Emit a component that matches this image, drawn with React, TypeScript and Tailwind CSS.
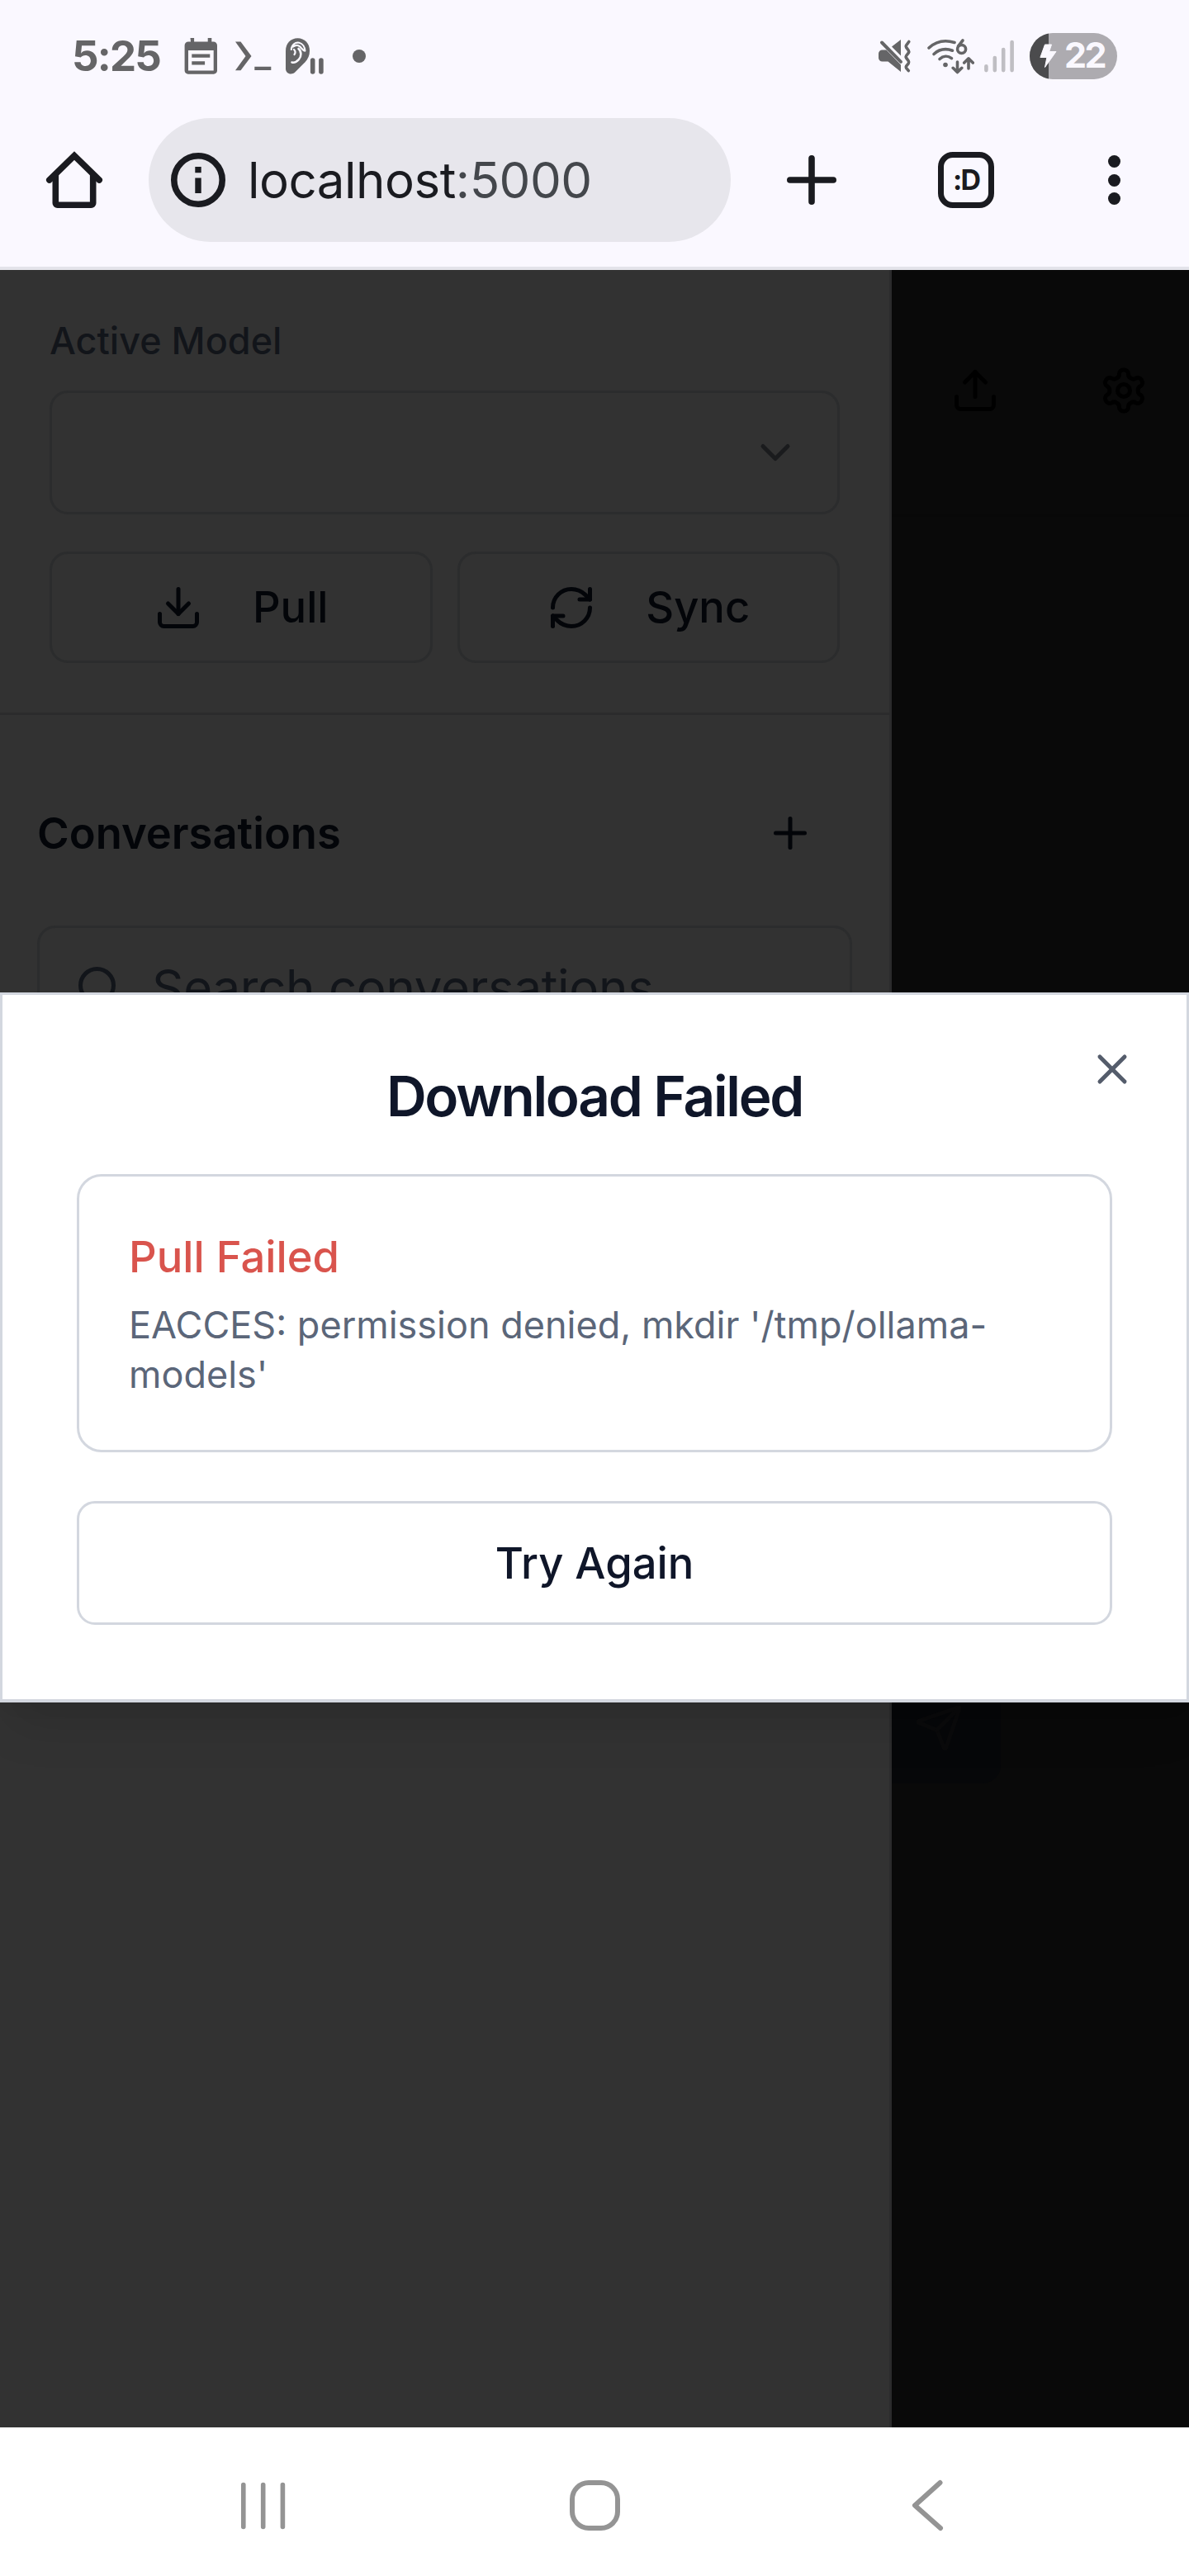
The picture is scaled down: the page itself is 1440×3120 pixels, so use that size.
import React from "react";
import { ChevronDown, Download, Plus, RefreshCw, Search, Send, Upload, X } from "lucide-react";

function CalendarIcon() {
  return (
    <svg className="ml-[29px] shrink-0" width="40" height="44" viewBox="223 43.5 40 44" fill="#656567">
      <path d="M230.5 43.5h4.6v4.5h16.6v-4.5h4.6v4.5h2.2a4.5 4.5 0 0 1 4.5 4.5v30.5a4.2 4.2 0 0 1-4.5 4.2h-30.4a4.2 4.2 0 0 1-4.5-4.2V52.5a4.5 4.5 0 0 1 4.5-4.5h2.9zM228 58.5v24.5h30.7V58.5z" fillRule="evenodd" />
      <path d="M232.3 63h22v4.2h-22zM232.3 71.8h15.8v4.2h-15.8z" />
    </svg>
  );
}

function TerminalIcon() {
  return (
    <svg className="ml-[21px] shrink-0" width="45" height="36" viewBox="284 49.5 45 36" fill="#656567">
      <path d="M285 50h6.5l13 17.5-13 17.2H285l12.5-17.2zM308.3 80.3h20v4.2h-20z" />
    </svg>
  );
}

function HearingIcon() {
  return (
    <svg className="ml-[17px] shrink-0" width="47" height="44" viewBox="346 44.5 47 44" fill="none">
      <path d="M346 60c0-9 6-15.3 14.5-15.3S375 51 375 60c0 5.5-2 10-5.5 13.8L357 86.3c-1.3 1.2-2.8 1.7-4.7 1.7-3.7 0-6.3-2.6-6.3-6.3z" fill="#656567" />
      <path d="M352.8 58.5c.6-6 5-9.2 9.4-8.2 4.3 1 7 5.2 7.2 9.8-3-.6-4-3-6.2-5.2-2.6-2.3-6-1.5-8.3.2" stroke="#faf8ff" strokeWidth="2.2" strokeLinecap="round" strokeLinejoin="round" />
      <path d="M361.5 57.5c3.8 3.2 3.8 9.4.3 13.2-2.5 2.7-6 4-8.3 3.3" stroke="#faf8ff" strokeWidth="2.6" strokeLinecap="round" />
      <path d="M356 58.5c1.7 1.7 2 4 .5 6" stroke="#faf8ff" strokeWidth="2.2" strokeLinecap="round" />
      <path d="M378.7 71.5v14M388.9 71.5v14" stroke="#656567" strokeWidth="5.6" strokeLinecap="round" />
    </svg>
  );
}

function MuteIcon() {
  return (
    <svg className="shrink-0" width="41" height="42" viewBox="1062 46.5 41 42" fill="none">
      <path d="M1063 64.5a4.5 4.5 0 0 1 4.5-4.5h5l17.5 18v8.5L1074.5 74h-7a4.5 4.5 0 0 1-4.5-4.5zM1079 56l11-8.5V67z" fill="#656567" />
      <path d="M1067 51l23 23.3" stroke="#656567" strokeWidth="4" strokeLinecap="round" />
      <path d="M1099.8 50l-3.3 4.5c-.6.9-.5 1.5.1 2.4l2.6 3.6c.8 1.2.8 2 0 3.2l-2.6 3.3c-.7 1-.7 1.6 0 2.6l2.6 3.6c.8 1.2.8 2 0 3.2l-2.6 3.2c-.6.9-.6 1.4 0 2.3l2.7 3.3" stroke="#656567" strokeWidth="3.6" strokeLinecap="round" strokeLinejoin="round" />
    </svg>
  );
}

function WifiIcon() {
  return (
    <svg className="ml-[18px] shrink-0" width="58" height="44" viewBox="1121 45.5 58 44" fill="none" stroke="#656567" strokeWidth="3.6" strokeLinecap="round" strokeLinejoin="round">
      <path d="M1124 57.5c9-8.3 20.5-9.7 31-6.5" />
      <path d="M1130 65c6.5-6 15-7 22.5-4.3" />
      <path d="M1137 71c4.3-4 10-4.3 14.5-.8" />
      <circle cx="1144" cy="78" r="2.8" fill="#656567" stroke="none" />
      <path d="M1165 48.5l-5.5 6.8" />
      <circle cx="1163.6" cy="59" r="5" />
      <path d="M1158.5 74.5V87M1153.2 81.8l5.3 5.2 5.3-5.2M1172 82.5V70.5M1166.7 75.5l5.3-5.2 5.3 5.2" />
    </svg>
  );
}

function SignalIcon() {
  return (
    <svg className="ml-[11px] shrink-0" width="38" height="40" viewBox="1190.5 47.5 38 40" stroke="#bfbec3" strokeWidth="4.6" strokeLinecap="round">
      <path d="M1193.9 79.8v4.8M1204.3 69.5v15.1M1214.7 59.5v25.1M1225.1 50.5v34.1" />
    </svg>
  );
}

function Battery() {
  return (
    <div className="relative ml-[18px] flex h-14 w-[106px] shrink-0 items-center overflow-hidden rounded-full bg-[#adabb0]">
      <div className="h-full w-[23px] bg-[#4b4b4d]" />
      <svg className="absolute left-[11px] top-[13px]" width="22" height="30" viewBox="1258 52 22 30">
        <path d="M1265.5 53h8l-2.8 8.5h8.3L1265.5 80.5l2.4-12h-8z" fill="#faf8ff" stroke="#faf8ff" strokeWidth="1" strokeLinejoin="round" />
      </svg>
      <span className="mb-[3px] ml-[19px] text-[43px] font-bold leading-none tracking-[-2.5px] text-[#faf8ff]">22</span>
    </div>
  );
}

function StatusBar() {
  return (
    <div className="flex h-[136px] items-center pl-[87px] pr-[87px]">
      <span className="mb-[2px] w-[107px] whitespace-nowrap text-[51px] font-bold leading-none tracking-[-1.8px] text-[#656567]">5:25</span>
      <CalendarIcon />
      <TerminalIcon />
      <HearingIcon />
      <div className="ml-[34px] size-4 rounded-full bg-[#656567]" />
      <div className="ml-auto flex items-center">
        <MuteIcon />
        <WifiIcon />
        <SignalIcon />
        <Battery />
      </div>
    </div>
  );
}

function BrowserBar() {
  return (
    <div className="flex h-[191px] items-center border-b-4 border-[#e3e3ea] pb-[23px] text-[#1a1b20]">
      <svg className="ml-[55px] shrink-0" width="70" height="70" viewBox="55 183 70 70" fill="none" stroke="#1a1b20" strokeWidth="7.6">
        <path d="M67.3 210v36a2.3 2.3 0 0 0 2.3 2.3h40.8a2.3 2.3 0 0 0 2.3-2.3v-36" />
        <path d="M59.8 218L90 188.5l30.2 29.5" strokeLinecap="round" />
      </svg>
      <div className="ml-[55px] flex h-[150px] w-[705px] shrink-0 items-center rounded-full bg-[#e7e6ec]">
        <svg className="ml-[26px] shrink-0" width="68" height="68" viewBox="206 184 68 68">
          <circle cx="240" cy="218" r="29.2" fill="none" stroke="#1a1b20" strokeWidth="7.6" />
          <path d="M236.3 202h7.4v7.2h-7.4zM236.3 215.5h7.4V234h-7.4z" fill="#1a1b20" />
        </svg>
        <span className="ml-[26px] whitespace-nowrap text-[60px] font-normal leading-none tracking-[-0.5px]">
          localhost<span className="text-[#44474c]">:5000</span>
        </span>
      </div>
      <svg className="ml-[67px] shrink-0" width="62" height="62" viewBox="952 187 62 62" stroke="#1a1b20" strokeWidth="7.6" strokeLinecap="round">
        <path d="M983 191.8v52.4M956.8 218h52.4" />
      </svg>
      <div className="ml-[122px] flex size-[68px] shrink-0 items-center justify-center rounded-[18px] border-[7.5px] border-[#1a1b20]">
        <span className="text-[34px] font-bold leading-none tracking-[-2px]">:D</span>
      </div>
      <div className="ml-[138px] flex flex-col gap-[7.5px]">
        <i className="size-[15px] rounded-full bg-[#1a1b20]" />
        <i className="size-[15px] rounded-full bg-[#1a1b20]" />
        <i className="size-[15px] rounded-full bg-[#1a1b20]" />
      </div>
    </div>
  );
}

function SidebarButton({ icon, label }: { icon: React.ReactNode; label: string }) {
  return (
    <button className="flex h-[135px] flex-1 items-center justify-center gap-[60px] rounded-[22px] border-[3px] border-[#2b2c2d] text-[52.5px] font-medium text-[#030509]">
      {icon}
      {label}
    </button>
  );
}

function Sidebar() {
  return (
    <aside className="w-[1080px] shrink-0 border-r-[3px] border-[#2b2b2c] bg-[#323232]">
      <section className="h-[539px] border-b-[3px] border-[#2b2b2c] px-[60px] pt-[56px]">
        <div className="h-[60px] text-[45px] font-medium leading-[60px] text-[#12151a]">Active Model</div>
        <div className="mt-[30px] flex h-[150px] items-center justify-end rounded-[22px] border-[3px] border-[#2b2c2d] pr-[45px]">
          <ChevronDown size={60} color="#1a1b1d" />
        </div>
        <div className="mt-[45px] flex gap-[30px]">
          <SidebarButton icon={<Download size={60} />} label="Pull" />
          <SidebarButton icon={<RefreshCw size={60} />} label="Sync" />
        </div>
      </section>
      <section className="px-[45px] pt-[83px] text-[#030509]">
        <div className="flex h-[120px] items-center justify-between pr-[45px]">
          <h2 className="text-[52.5px] font-semibold">Conversations</h2>
          <Plus size={60} />
        </div>
        <div className="mt-[52px] flex h-[150px] items-center gap-[34px] rounded-[22px] border-[3px] border-[#2b2c2d] px-[42px] text-[60px] tracking-[-0.3px] text-[#12151a]">
          <Search size={60} />
          <span className="whitespace-nowrap">Search conversations...</span>
        </div>
      </section>
    </aside>
  );
}

function SettingsIcon() {
  return (
    <svg width="60" height="60" viewBox="0 0 24 24" fill="none" stroke="#000" strokeWidth="2" strokeLinecap="round" strokeLinejoin="round">
      <path d="M12.22 2h-.44a2 2 0 0 0-2 2v.18a2 2 0 0 1-1 1.73l-.43.25a2 2 0 0 1-2 0l-.15-.08a2 2 0 0 0-2.73.73l-.22.38a2 2 0 0 0 .73 2.73l.15.1a2 2 0 0 1 1 1.72v.51a2 2 0 0 1-1 1.74l-.15.09a2 2 0 0 0-.73 2.73l.22.38a2 2 0 0 0 2.73.73l.15-.08a2 2 0 0 1 2 0l.43.25a2 2 0 0 1 1 1.73V20a2 2 0 0 0 2 2h.44a2 2 0 0 0 2-2v-.18a2 2 0 0 1 1-1.73l.43-.25a2 2 0 0 1 2 0l.15.08a2 2 0 0 0 2.73-.73l.22-.39a2 2 0 0 0-.73-2.73l-.15-.08a2 2 0 0 1-1-1.74v-.5a2 2 0 0 1 1-1.74l.15-.09a2 2 0 0 0 .73-2.73l-.22-.38a2 2 0 0 0-2.73-.73l-.15.08a2 2 0 0 1-2 0l-.43-.25a2 2 0 0 1-1-1.73V4a2 2 0 0 0-2-2z" />
      <circle cx="12" cy="12" r="3" />
    </svg>
  );
}

function ChatArea() {
  return (
    <section className="flex flex-1 flex-col justify-between bg-[#090909]">
      <header className="flex h-[299px] items-center gap-[120px] border-b-[3px] border-[#080808] pb-[4px] pl-[71px]">
        <Upload size={60} color="#000" />
        <SettingsIcon />
      </header>
      <div className="mb-[780px] flex h-[150px] w-[132px] items-center rounded-r-[22px] bg-[#060709] pl-[27px]">
        <Send size={60} color="#0a0a0b" className="mt-[16px]" />
      </div>
    </section>
  );
}

function DownloadFailedDialog() {
  return (
    <div
      role="dialog"
      className="absolute inset-x-0 top-[875px] flex h-[860px] flex-col border-[3px] border-b-4 border-[#d3d7df] bg-white px-[90px] pt-[81px] text-[#0f1629] shadow-[0_38px_56px_-11px_rgba(0,0,0,0.1),0_15px_22px_-15px_rgba(0,0,0,0.1)]"
    >
      <X size={60} color="#545c6b" className="absolute right-[60px] top-[60px]" />
      <h1 className="h-[84px] text-center text-[67.5px] font-semibold leading-[84px] tracking-[-0.034em]">Download Failed</h1>
      <div className="mt-[52px] h-[337px] rounded-[30px] border-[3px] border-[#d3d7df] px-[60px] pt-[58px]">
        <div className="h-[78px] text-[52.5px] font-medium leading-[78px] text-[#d9544d]">Pull Failed</div>
        <p className="mt-[14px] text-[45px] leading-[60px] text-[#5b6679]">
          EACCES: permission denied, mkdir '/tmp/ollama-models'
        </p>
      </div>
      <button className="mt-[59px] h-[150px] rounded-[22px] border-[3px] border-[#d3d7df] text-[52.5px] font-medium">Try Again</button>
    </div>
  );
}

function NavigationBar() {
  return (
    <nav className="flex h-[180px] items-center bg-white pt-[9px]">
      <svg className="ml-[291px]" width="55" height="62" viewBox="291 3003.5 55 62" stroke="#949494" strokeWidth="5.6" strokeLinecap="round">
        <path d="M294.8 3009v51M318.7 3009v51M342.4 3009v51" />
      </svg>
      <div className="ml-[344px] size-[61px] rounded-[23px] border-[6px] border-[#949494]" />
      <svg className="ml-[352px]" width="40" height="63" viewBox="1103 3003 40 63" fill="none" stroke="#949494" strokeWidth="6" strokeLinecap="round" strokeLinejoin="round">
        <path d="M1138.5 3007l-30.5 27.5 31 27.5" />
      </svg>
    </nav>
  );
}

export default function App() {
  return (
    <div className="flex h-[3120px] w-[1440px] flex-col overflow-hidden bg-[#faf8ff] font-['Inter',sans-serif]">
      <StatusBar />
      <BrowserBar />
      <main className="relative flex h-[2613px] overflow-hidden">
        <Sidebar />
        <ChatArea />
        <DownloadFailedDialog />
      </main>
      <NavigationBar />
    </div>
  );
}
